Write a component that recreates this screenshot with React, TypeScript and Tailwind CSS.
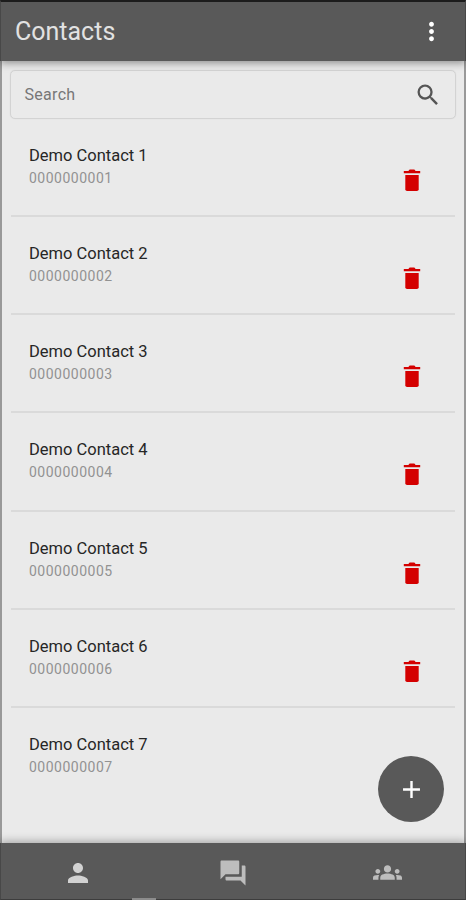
import { MdAdd, MdForum, MdGroups, MdMoreVert, MdPerson, MdSearch } from "react-icons/md";

const contacts = [1, 2, 3, 4, 5, 6, 7].map((n) => ({
  name: `Demo Contact ${n}`,
  phone: `000000000${n}`,
}));

function TrashIcon({ className }: { className: string }) {
  return (
    <svg viewBox="0 0 28 28" className={className} fill="currentColor" aria-hidden="true">
      <path d="M7.3 9h13.4v14.2a1.8 1.8 0 0 1-1.8 1.8H9.1a1.8 1.8 0 0 1-1.8-1.8z" />
      <path d="M5.8 5h4.7c.5-1 1.1-1.4 2-1.4h3c.9 0 1.5.4 2 1.4h4.7v2.3H5.8z" />
    </svg>
  );
}

function Header() {
  return (
    <header className="relative z-10 flex h-[61px] shrink-0 items-center justify-between border-x border-t-2 border-x-[#484848] border-t-[#1c1c1c] bg-[#595959] pr-[19px] pl-[14px] shadow-[0_2px_8px_rgba(0,0,0,0.4)]">
      <h1 className="text-[25px] leading-none text-[#e2e2e2]">Contacts</h1>
      <button aria-label="More" className="text-white">
        <MdMoreVert size={29} />
      </button>
    </header>
  );
}

function SearchBox() {
  return (
    <div className="mx-2 mt-[9px] flex h-[49px] shrink-0 items-center justify-between rounded-[5px] border-[1.5px] border-[#d3d3d3] pr-[13px] pl-[13.5px] shadow-[0_0_1px_rgba(0,0,0,0.12)]">
      <span className="text-base tracking-[0.3px] text-[#777777]">Search</span>
      <MdSearch size={28} className="text-[#555555]" />
    </div>
  );
}

function ContactRow({ name, phone, last }: { name: string; phone: string; last: boolean }) {
  return (
    <li className={`flex h-[98.15px] justify-between pr-[29px] pl-[18px] ${last ? "" : "border-b-2 border-[#dadada]"}`}>
      <div className="pt-[25px]">
        <p className="text-[16.5px] leading-6 text-[#262626]">{name}</p>
        <p className="text-[14px] leading-[21px] tracking-[0.5px] text-[#929292]">{phone}</p>
      </div>
      {!last && <TrashIcon className="mt-[47px] size-7 text-[#d40000]" />}
    </li>
  );
}

function BottomNav() {
  return (
    <nav className="relative grid h-[57px] shrink-0 grid-cols-3 items-center justify-items-center border-x border-b border-x-[#484848] border-b-[#3d3d3d] bg-[#595959] pt-[3px] text-[#bdbdbd] shadow-[0_-2px_8px_rgba(0,0,0,0.28)]">
      <MdPerson size={30} className="text-[#d2d2d2]" />
      <MdForum size={30} />
      <MdGroups size={29} />
      <span className="absolute -bottom-px left-[131px] h-0.5 w-6 bg-[#8c8c8c]" />
    </nav>
  );
}

export default function App() {
  return (
    <div className="relative flex h-[900px] w-[466px] flex-col overflow-hidden bg-[#eaeaea] font-[Roboto,sans-serif]">
      <Header />
      <main className="flex min-h-0 flex-1 flex-col border-x-2 border-[#999999]">
        <SearchBox />
        <ul className="mx-[9px] min-h-0 flex-1 overflow-hidden">
          {contacts.map((c, i) => (
            <ContactRow key={c.phone} {...c} last={i === contacts.length - 1} />
          ))}
        </ul>
      </main>
      <button
        aria-label="Add contact"
        className="absolute right-[22px] bottom-[78px] flex size-[66px] items-center justify-center rounded-full bg-[#595959] text-white"
      >
        <MdAdd size={29} />
      </button>
      <BottomNav />
    </div>
  );
}
